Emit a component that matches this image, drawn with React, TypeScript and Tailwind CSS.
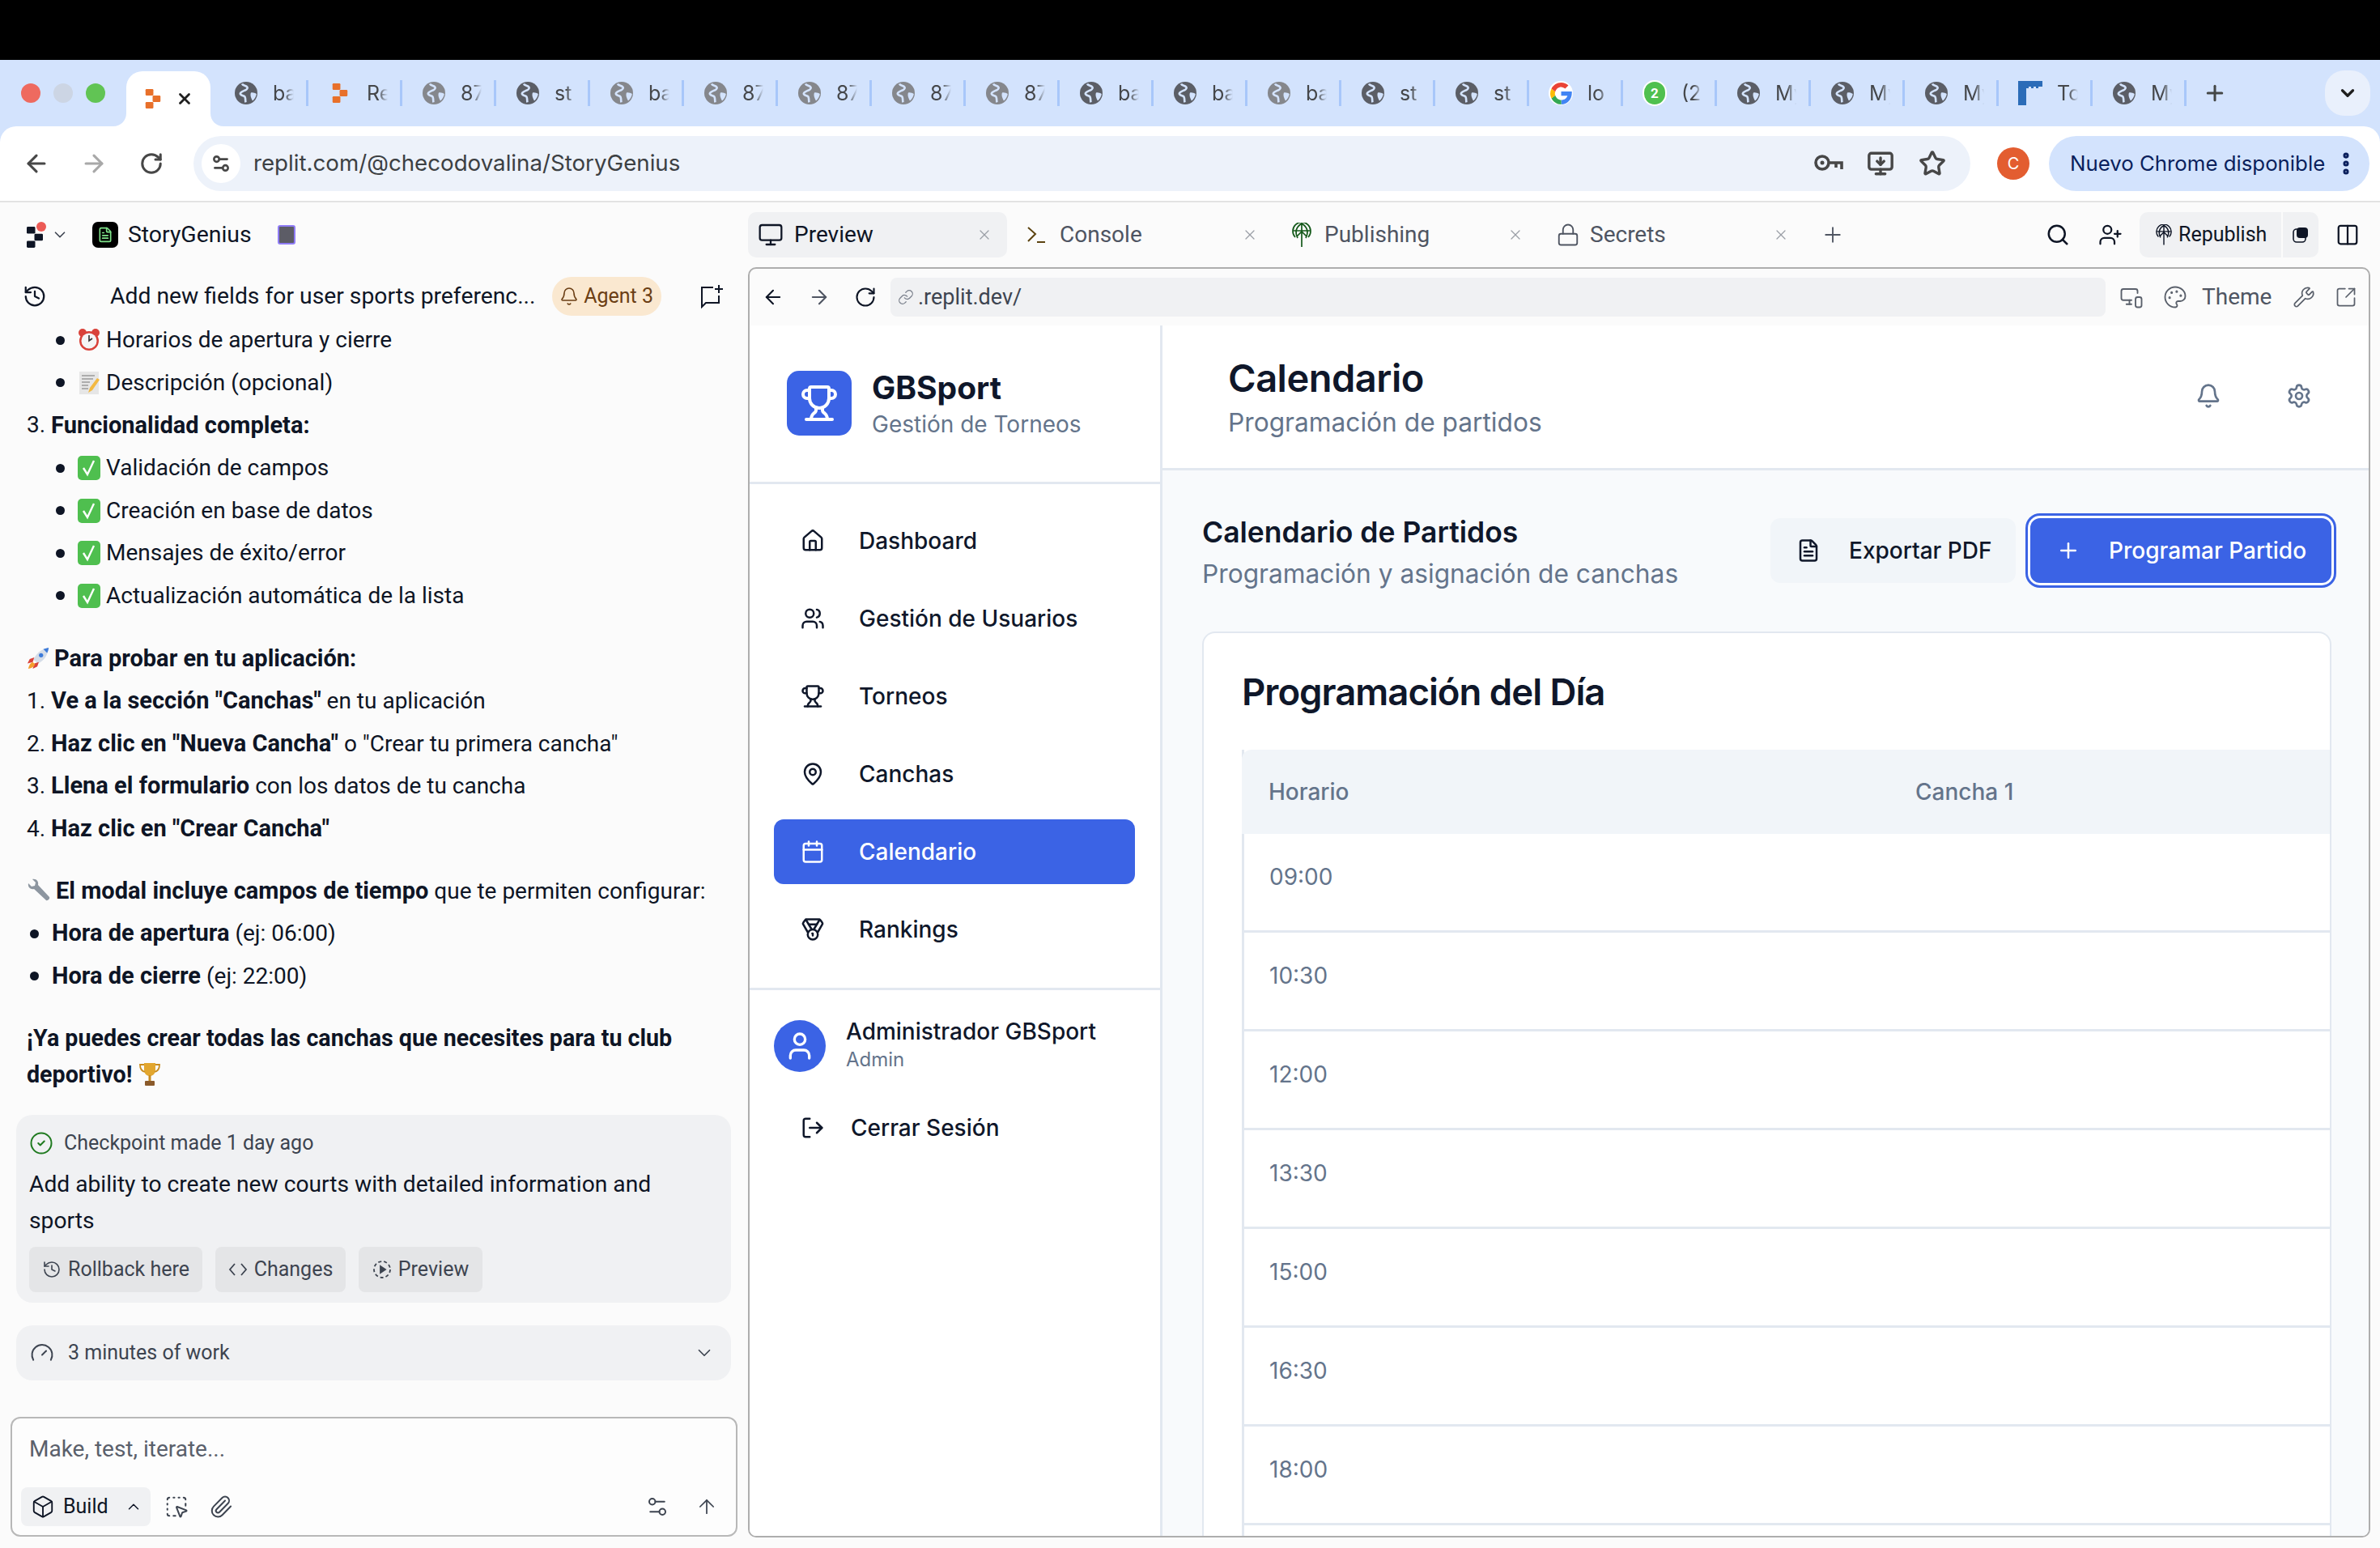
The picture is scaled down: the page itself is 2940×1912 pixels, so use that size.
import {
  ArrowLeft, ArrowRight, ArrowUp, Bell, Box, Calendar, ChevronDown, ChevronUp, CircleCheck, Columns2, EllipsisVertical, FileText, Gauge, History, House, Link, LogOut, MapPin, Medal, Monitor, MonitorDown, MonitorSmartphone, Palette, Paperclip, Plus, RotateCw, Search, Settings, Settings2, SquareArrowOutUpRight, SquareDashedMousePointer, Star, Lock, Trophy, User, UserPlus, Users, Wrench, X,
} from 'lucide-react';
import type { ReactNode } from 'react';

const plex = { fontFamily: 'Roboto, "Noto Sans", sans-serif' };

const ReplitMark = ({ color, className }: { color: string; className: string }) => (
  <svg viewBox="0 0 20 26" className={className} fill={color}>
    <rect x="0" y="0" width="10.5" height="8.6" rx="1.4" />
    <rect x="9.5" y="8.7" width="10.5" height="8.6" rx="1.4" />
    <rect x="0" y="17.4" width="10.5" height="8.6" rx="1.4" />
  </svg>
);

const Globe = ({ dark }: { dark: boolean }) => (
  <svg viewBox="0 0 30 30" className="w-[30px] h-[30px] shrink-0">
    <circle cx="15" cy="15" r="14" fill={dark ? '#5b5e66' : '#85878c'} />
    <path d="M10 3.5c1 2.5 5 2 6.5 4.200 1 1.800-1.500 3.200-3.200 4-2 1-5.200 1.500-5.500 4-.2 2 3.200 2 5 3.200 2 1.300 1 5 1.700 7.500" fill="none" stroke="#d3e3fd" strokeWidth="2.600" />
    <path d="M21 14.500c2.500-.5 5 .5 6.800 1.500-.5 3.500-2.300 6.500-4.800 8.500-1.500-2.500-3.500-7-2-10z" fill="#d3e3fd" />
  </svg>
);

const GoogleIcon = () => (
  <div className="w-[30px] h-[30px] shrink-0 rounded-full bg-white flex items-center justify-center">
    <svg viewBox="7 7 16 16" className="w-[27px] h-[27px]">
      <path d="M15 13.500h7.800c.5 5.500-3.200 9.500-7.800 9.500v-3.200c2.500 0 4.100-1.300 4.600-3.100H15z" fill="#4285f4" />
      <path d="M15 23c-3.100 0-5.800-1.800-7.100-4.400l2.800-2.200c.6 2 2.300 3.400 4.300 3.400z" fill="#34a853" />
      <path d="M7.900 18.600c-1.200-2.300-1.200-4.900 0-7.200l2.800 2.200c-.4 1-.4 1.900 0 2.800z" fill="#fbbc05" />
      <path d="M7.900 11.400C9.200 8.800 11.900 7 15 7c2.100 0 3.900.8 5.300 2.100l-2.400 2.400c-.8-.7-1.800-1.300-2.900-1.300-2 0-3.700 1.400-4.300 3.400z" fill="#ea4335" />
    </svg>
  </div>
);

const WhatsAppIcon = () => (
  <div className="relative w-[30px] h-[32px] shrink-0 rounded-full bg-[#4fc04f] border-2 border-white flex items-center justify-center text-white text-[17px] font-bold leading-none" style={plex}>
    2
  </div>
);

const ToIcon = () => (
  <svg viewBox="0 0 30 30" className="w-[30px] h-[32px] shrink-0">
    <rect width="30" height="30" fill="#2b6cb8" />
    <path d="M10 30V9h3V7h3v2h3V7h3v2h3V7h5v5H12v18z" fill="#d3e3fd" />
    <rect x="11" y="12" width="19" height="18" fill="#d3e3fd" />
  </svg>
);

const TABS: { label: string; icon: ReactNode }[] = [
  { label: 'ba', icon: <Globe dark /> },
  { label: 'Re', icon: <ReplitMark color="#e8702a" className="w-[20px] h-[24px] mx-[5px] shrink-0" /> },
  { label: '87', icon: <Globe dark={false} /> },
  { label: 'st', icon: <Globe dark /> },
  { label: 'ba', icon: <Globe dark={false} /> },
  { label: '87', icon: <Globe dark={false} /> },
  { label: '87', icon: <Globe dark={false} /> },
  { label: '87', icon: <Globe dark={false} /> },
  { label: '87', icon: <Globe dark={false} /> },
  { label: 'ba', icon: <Globe dark /> },
  { label: 'ba', icon: <Globe dark /> },
  { label: 'ba', icon: <Globe dark={false} /> },
  { label: 'st', icon: <Globe dark /> },
  { label: 'st', icon: <Globe dark /> },
  { label: 'lo', icon: <GoogleIcon /> },
  { label: '(2', icon: <WhatsAppIcon /> },
  { label: 'My', icon: <Globe dark /> },
  { label: 'My', icon: <Globe dark /> },
  { label: 'My', icon: <Globe dark /> },
  { label: 'To', icon: <ToIcon /> },
  { label: 'My', icon: <Globe dark /> },
];

const ChromeTabs = () => (
  <div className="h-[82px] flex items-center bg-[#d3e3fd] font-['Inter']">
    <div className="w-[156px] pl-[26px] flex gap-[16px] shrink-0">
      <span className="w-[24px] h-[24px] rounded-full bg-[#ee6a5f]" />
      <span className="w-[24px] h-[24px] rounded-full bg-[#ccd5e4]" />
      <span className="w-[24px] h-[24px] rounded-full bg-[#61c454]" />
    </div>
    <div className="relative self-end w-[104px] h-[68px] bg-white rounded-t-[20px] flex items-center pl-[23px] gap-[18px] shrink-0">
      <ReplitMark color="#e8702a" className="w-[20px] h-[24px]" />
      <X className="w-[22px] h-[22px] text-[#1f1f1f]" strokeWidth={3} />
      <svg viewBox="0 0 16 16" className="absolute -left-[16px] bottom-0 w-[16px] h-[16px]"><path d="M16 0v16H0C9 16 16 9 16 0z" fill="#fff" /></svg>
      <svg viewBox="0 0 16 16" className="absolute -right-[16px] bottom-0 w-[16px] h-[16px]"><path d="M0 0v16h16C7 16 0 9 0 0z" fill="#fff" /></svg>
    </div>
    <div className="flex ml-[5px] shrink-0">
      {TABS.map((t, i) => (
        <div key={i} className="relative w-[116px] h-[32px] flex items-center pl-[24px] gap-[18px] border-r-[3px] border-[#a8c7fa]">
          {t.icon}
          <span className="w-[26px] overflow-hidden whitespace-nowrap text-[25px] leading-[32px] text-[#45474a] [mask-image:linear-gradient(to_right,black_55%,transparent)]">{t.label}</span>
        </div>
      ))}
    </div>
    <Plus className="w-[30px] h-[30px] text-[#444746] ml-[20px] shrink-0" strokeWidth={2.4} />
    <div className="ml-auto mr-[12px] w-[56px] h-[56px] rounded-[24px] bg-[#e9f0fc] flex items-center justify-center">
      <ChevronDown className="w-[26px] h-[26px] text-[#1f1f1f]" strokeWidth={3} />
    </div>
  </div>
);

const ChromeToolbar = () => (
  <div className="bg-[#d3e3fd]">
    <div className="h-[94px] bg-white rounded-t-[20px] border-b-2 border-[#e3e3e3] flex items-center font-['Inter']">
      <ArrowLeft className="w-[34px] h-[34px] ml-[28px] text-[#474747] shrink-0" strokeWidth={2.2} />
      <ArrowRight className="w-[34px] h-[34px] ml-[37px] text-[#a8a8a8] shrink-0" strokeWidth={2.2} />
      <RotateCw className="w-[30px] h-[30px] ml-[39px] text-[#474747] shrink-0" strokeWidth={2.4} />
      <div className="ml-[37px] w-[2195px] h-[68px] rounded-full bg-[#edf2fa] flex items-center pl-[10px] shrink-0">
        <div className="w-[48px] h-[48px] rounded-full bg-white flex items-center justify-center">
          <Settings2 className="w-[26px] h-[26px] text-[#474747]" strokeWidth={2.4} />
        </div>
        <span className="ml-[16px] text-[27.700px] text-[#3c4043]">replit.com/@checodovalina/StoryGenius</span>
        <svg viewBox="0 0 36 24" className="ml-auto w-[36px] h-[24px] text-[#474747]" fill="none" stroke="currentColor" strokeWidth="3.600">
          <circle cx="10" cy="11" r="8" />
          <circle cx="10" cy="11" r="2.500" fill="currentColor" stroke="none" />
          <path d="M18 11h16v8M27 11v6" />
        </svg>
        <MonitorDown className="ml-[29px] w-[34px] h-[34px] text-[#474747]" strokeWidth={2.4} />
        <Star className="ml-[30px] mr-[30px] w-[34px] h-[34px] text-[#474747]" strokeWidth={2.4} />
      </div>
      <div className="ml-[33px] w-[40px] h-[40px] rounded-full bg-[#e35d30] text-white text-[20px] flex items-center justify-center shrink-0">C</div>
      <div className="ml-[24px] w-[396px] h-[68px] rounded-full bg-[#d3e3fd] flex items-center pl-[26px] shrink-0">
        <span className="text-[25.800px] text-[#0a1f5c] whitespace-nowrap">Nuevo Chrome disponible</span>
        <EllipsisVertical className="ml-[9px] w-[34px] h-[34px] text-[#0a1f5c]" strokeWidth={3} />
      </div>
    </div>
  </div>
);

const IconClock = () => (
  <svg viewBox="0 0 28 30" className="w-[28px] h-[30px] shrink-0">
    <circle cx="6" cy="6" r="5" fill="#d9423a" /><circle cx="22" cy="6" r="5" fill="#d9423a" />
    <circle cx="14" cy="16" r="12" fill="#d9423a" /><circle cx="14" cy="16" r="9.500" fill="#f5f5f5" />
    <path d="M14 9v7l4-3" stroke="#333" strokeWidth="1.600" fill="none" />
  </svg>
);
const IconMemo = () => (
  <svg viewBox="0 0 28 30" className="w-[28px] h-[30px] shrink-0">
    <rect x="2" y="1" width="24" height="28" fill="#e6e6e6" />
    <path d="M5 6h16M5 10h14M5 14h10M5 18h8M5 22h8" stroke="#9a9a9a" strokeWidth="1.300" />
    <path d="M13 27l2-6L24 9l3 2-9 13z" fill="#f3b942" />
  </svg>
);
const IconCheck = () => (
  <svg viewBox="0 0 28 30" className="w-[28px] h-[30px] shrink-0">
    <rect x="0" y="0" width="28" height="30" rx="5" fill="#4fbf4f" />
    <path d="M7 15l5 8 8-17" stroke="#fff" strokeWidth="2.400" fill="none" />
  </svg>
);
const IconRocket = () => (
  <svg viewBox="0 0 30 30" className="w-[28px] h-[30px] shrink-0">
    <path d="M9 17C12 9 19 3 29 1c-1 10-6 17-14 21z" fill="#d5dde8" />
    <path d="M22 3l7-2c0 2-1 5-2 7z" fill="#3d7bd9" />
    <circle cx="19" cy="11" r="2.800" fill="#3d7bd9" />
    <path d="M10 14l-6 2-3 6 7-2zM16 20l-2 6-6 3 2-7z" fill="#d9423a" />
    <path d="M8 20c-3 1-5 4-6 9 5-1 8-3 9-6z" fill="#f59e2c" />
  </svg>
);
const IconWrench = () => (
  <svg viewBox="0 0 30 30" className="w-[30px] h-[30px] shrink-0">
    <path d="M2 6l4 4 4-1 1-4-4-4c5-1 8 3 7 7l14 15c1 2-2 5-4 4L9 13C5 14 1 11 2 6z" fill="#8d96a0" />
  </svg>
);
const IconTrophy = () => (
  <svg viewBox="0 0 28 30" className="w-[28px] h-[30px] shrink-0">
    <path d="M7 1h14v8c0 5-3 8-7 8s-7-3-7-8z" fill="#e2a62e" />
    <path d="M7 3H2c0 5 2 8 6 9M21 3h5c0 5-2 8-6 9" fill="none" stroke="#c98c1e" strokeWidth="1.800" />
    <rect x="12.500" y="16" width="3" height="7" fill="#c98c1e" />
    <rect x="8" y="23" width="12" height="6" rx="1" fill="#8a5a2b" />
  </svg>
);

const Bullet = ({ children, icon }: { children: ReactNode; icon?: ReactNode }) => (
  <div className="h-[52.600px] flex items-center">
    <span className="ml-[69px] w-[11px] h-[11px] rounded-full bg-[#0e1525] shrink-0" />
    <span className="ml-[16px] mr-[7px]">{icon}</span>
    <span>{children}</span>
  </div>
);

const Sub = ({ children }: { children: ReactNode }) => (
  <div className="h-[52.600px] flex items-center pl-[33px] whitespace-pre">{children}</div>
);

const Strong = ({ children }: { children: ReactNode }) => (
  <b className="font-bold text-[29px]">{children}</b>
);

const ChatPane = () => (
  <div className="w-[924px] shrink-0 flex flex-col text-[#0e1525] text-[28px]" style={plex}>
    <div className="h-[80px] flex items-center pl-[33px]">
      <div className="relative w-[20px] h-[32px]">
        <ReplitMark color="#0e1525" className="absolute left-0 bottom-0 w-[20px] h-[26px]" />
        <span className="absolute left-[12px] top-0 w-[12px] h-[12px] rounded-full bg-[#ec5b56]" />
      </div>
      <ChevronDown className="ml-[10px] w-[22px] h-[22px] text-[#3d4450]" strokeWidth={1.800} />
      <div className="ml-[29px] w-[32px] h-[32px] rounded-[7px] bg-black flex items-center justify-center">
        <FileText className="w-[20px] h-[20px] text-[#7fe38a]" strokeWidth={2} />
      </div>
      <span className="ml-[12px] text-[28.400px]">StoryGenius</span>
      <span className="ml-[32px] w-[22px] h-[24px] rounded-[3px] bg-[#5c5c66] border-2 border-[#8f7cf5]" />
    </div>
    <div className="h-[72px] flex items-center pl-[28px] pr-[30px]">
      <History className="w-[30px] h-[30px] shrink-0" strokeWidth={1.800} />
      <span className="ml-[78px] whitespace-nowrap text-[28.300px]">Add new fields for user sports preferenc...</span>
      <div className="ml-[20px] w-[135px] h-[48px] rounded-full bg-[#fae8d0] text-[#6b3e14] text-[25px] flex items-center justify-center gap-[6px] shrink-0">
        <Bell className="w-[24px] h-[24px]" strokeWidth={1.600} />
        Agent 3
      </div>
      <svg viewBox="0 0 30 30" className="ml-auto w-[30px] h-[30px] shrink-0" fill="none" stroke="currentColor" strokeWidth="2">
        <path d="M17 4H3v24l5-5h16v-9" />
        <path d="M24 1v10M19 6h10" />
      </svg>
    </div>
    <div className="-mt-[8px]">
      <Bullet icon={<IconClock />}>Horarios de apertura y cierre</Bullet>
      <Bullet icon={<IconMemo />}>Descripción (opcional)</Bullet>
      <Sub>3. <Strong>Funcionalidad completa:</Strong></Sub>
      <Bullet icon={<IconCheck />}>Validación de campos</Bullet>
      <Bullet icon={<IconCheck />}>Creación en base de datos</Bullet>
      <Bullet icon={<IconCheck />}>Mensajes de éxito/error</Bullet>
      <Bullet icon={<IconCheck />}>Actualización automática de la lista</Bullet>
      <div className="h-[25px]" />
      <Sub><span className="flex items-center gap-[6px]"><IconRocket /><Strong>Para probar en tu aplicación:</Strong></span></Sub>
      <Sub>1. <Strong>Ve a la sección "Canchas"</Strong> en tu aplicación</Sub>
      <Sub>2. <Strong>Haz clic en "Nueva Cancha"</Strong> o "Crear tu primera cancha"</Sub>
      <Sub>3. <Strong>Llena el formulario</Strong> con los datos de tu cancha</Sub>
      <Sub>4. <Strong>Haz clic en "Crear Cancha"</Strong></Sub>
      <div className="h-[24px]" />
      <Sub><span className="flex items-center gap-[6px]"><IconWrench /><span><Strong>El modal incluye campos de tiempo</Strong> que te permiten configurar:</span></span></Sub>
      <div className="h-[52.600px] flex items-center pl-[37px]"><span className="w-[11px] h-[11px] rounded-full bg-[#0e1525] mr-[16px]" /><span><Strong>Hora de apertura</Strong> (ej: 06:00)</span></div>
      <div className="h-[52.600px] flex items-center pl-[37px]"><span className="w-[11px] h-[11px] rounded-full bg-[#0e1525] mr-[16px]" /><span><Strong>Hora de cierre</Strong> (ej: 22:00)</span></div>
      <div className="mt-[28px] pl-[33px] w-[880px] leading-[45px] font-bold text-[28.650px]">
        ¡Ya puedes crear todas las canchas que necesites para tu club deportivo! <span className="inline-block align-[-5px]"><IconTrophy /></span>
      </div>
    </div>
    <div className="mt-[27px] ml-[20px] w-[883px] h-[232px] bg-[#f0f1f3] rounded-[20px] px-[16px] pt-[18px]">
      <div className="flex items-center h-[34px] text-[25px] text-[#3d4450]">
        <CircleCheck className="w-[30px] h-[30px] text-[#1f7a1f] mr-[13px]" strokeWidth={1.600} />
        Checkpoint made 1 day ago
      </div>
      <div className="mt-[11px] leading-[45px] w-[830px] text-[28.200px]">Add ability to create new courts with detailed information and sports</div>
      <div className="mt-[10px] flex gap-[16px] text-[25px] text-[#3d4450]">
        <div className="h-[56px] w-[214px] rounded-[8px] bg-[#e4e5e7] flex items-center justify-center gap-[8px]"><History className="w-[24px] h-[24px]" strokeWidth={1.600} />Rollback here</div>
        <div className="h-[56px] w-[161px] rounded-[8px] bg-[#e4e5e7] flex items-center justify-center gap-[8px]">
          <svg viewBox="0 0 24 24" className="w-[24px] h-[24px]" fill="none" stroke="currentColor" strokeWidth="1.800"><path d="M8 5l-6 7 6 7M16 5l6 7-6 7" /></svg>
          Changes
        </div>
        <div className="h-[56px] w-[153px] rounded-[8px] bg-[#e4e5e7] flex items-center justify-center gap-[8px]">
          <svg viewBox="0 0 24 24" className="w-[24px] h-[24px]" fill="none" stroke="currentColor" strokeWidth="1.800"><circle cx="12" cy="12" r="10" strokeDasharray="4 3" /><path d="M10 8l6 4-6 4z" fill="currentColor" /></svg>
          Preview
        </div>
      </div>
    </div>
    <div className="mt-[28px] ml-[20px] w-[883px] h-[68px] bg-[#f0f1f3] rounded-[20px] flex items-center pl-[17px] pr-[20px] text-[25px] text-[#3d4450]">
      <Gauge className="w-[30px] h-[30px] mr-[17px]" strokeWidth={1.600} />
      3 minutes of work
      <ChevronDown className="ml-auto w-[26px] h-[26px]" strokeWidth={1.600} />
    </div>
    <div className="mt-[45px] ml-[13px] w-[898px] h-[148px] rounded-[12px] border-2 border-[#b8b8b8] bg-[#fdfdfd] flex flex-col">
      <div className="h-[76px] flex items-center pl-[21px] text-[#5a606b]">Make, test, iterate...</div>
      <div className="mt-[9px] flex items-center pl-[11px] pr-[22px]">
        <div className="w-[160px] h-[48px] rounded-[8px] bg-[#f0f1f3] flex items-center pl-[12px] text-[25px]">
          <Box className="w-[30px] h-[30px] mr-[10px]" strokeWidth={1.500} />
          Build
          <ChevronUp className="ml-[20px] w-[22px] h-[22px]" strokeWidth={1.600} />
        </div>
        <SquareDashedMousePointer className="ml-[17px] w-[30px] h-[30px] text-[#3d4450]" strokeWidth={1.600} />
        <Paperclip className="ml-[25px] w-[30px] h-[30px] text-[#3d4450]" strokeWidth={1.600} />
        <Settings2 className="ml-auto w-[30px] h-[30px] text-[#3d4450]" strokeWidth={1.600} />
        <ArrowUp className="ml-[32px] w-[28px] h-[28px] text-[#3d4450]" strokeWidth={1.500} />
      </div>
    </div>
  </div>
);

const PublishIcon = ({ className }: { className: string }) => (
  <svg viewBox="0 0 24 30" className={className} fill="none" stroke="currentColor" strokeWidth="1.700">
    <path d="M4 18a11 11 0 1 1 16 0" />
    <path d="M1.500 10h21M12 0v30M12 1c-8 5-8 12-5 18M12 1c8 5 8 12 5 18M6 17l6-6 6 6" />
  </svg>
);

const WorkspaceTab = ({ icon, label, active, close }: { icon: ReactNode; label: string; active?: boolean; close: string }) => (
  <div className={`relative w-[320px] h-[56px] rounded-[10px] flex items-center shrink-0 ${active ? 'bg-[#f0f1f3] text-[#0e1525]' : 'text-[#4f5562]'}`}>
    {icon}
    <span className="text-[28px] whitespace-nowrap">{label}</span>
    <X className={`absolute top-[18px] w-[20px] h-[20px] text-[#9a9ea6] ${close}`} strokeWidth={1.500} />
  </div>
);

const NAV = [
  { label: 'Dashboard', icon: House },
  { label: 'Gestión de Usuarios', icon: Users },
  { label: 'Torneos', icon: Trophy },
  { label: 'Canchas', icon: MapPin },
  { label: 'Calendario', icon: Calendar },
  { label: 'Rankings', icon: Medal },
];

const Sidebar = () => (
  <div className="w-[510px] shrink-0 bg-white border-r-[3px] border-[#e2e8f0] flex flex-col">
    <div className="h-[196px] shrink-0 pl-[46px] pt-[55px] flex border-b-[3px] border-[#e2e8f0]">
      <div className="w-[80px] h-[80px] mt-[1px] rounded-[15px] bg-[#3b63e5] flex items-center justify-center shrink-0">
        <Trophy className="w-[48px] h-[48px] text-white" strokeWidth={2} />
      </div>
      <div className="ml-[25px]">
        <div className="text-[39px] leading-[44px] font-bold text-[#0f172a]">GBSport</div>
        <div className="text-[28px] leading-[38px] mt-[4px] text-[#64748b]">Gestión de Torneos</div>
      </div>
    </div>
    <div className="pt-[30px] pb-[32px] px-[30px] border-b-[3px] border-[#e2e8f0] flex flex-col gap-[16px]">
      {NAV.map((n) => (
        <div key={n.label} className={`h-[80px] w-[446px] rounded-[12px] flex items-center pl-[33px] gap-[42px] text-[28px] font-medium ${n.label === 'Calendario' ? 'bg-[#3b63e5] text-white' : 'text-[#0f172a]'}`}>
          <n.icon className="w-[30px] h-[30px]" strokeWidth={2} />
          {n.label}
        </div>
      ))}
    </div>
    <div className="pt-[34px] pl-[30px] flex items-center">
      <div className="w-[64px] h-[64px] rounded-full bg-[#3b63e5] flex items-center justify-center shrink-0">
        <User className="w-[40px] h-[40px] text-white" strokeWidth={2} />
      </div>
      <div className="ml-[25px]">
        <div className="text-[28px] leading-[34px] font-medium text-[#0f172a]">Administrador GBSport</div>
        <div className="text-[24px] leading-[36px] text-[#64748b]">Admin</div>
      </div>
    </div>
    <div className="mt-[45px] pl-[63px] flex items-center gap-[19px] text-[28px] font-medium text-[#0f172a]">
      <LogOut className="w-[30px] h-[30px]" strokeWidth={2} />
      <span className="ml-[13px]">Cerrar Sesión</span>
    </div>
  </div>
);

const TIMES = ['09:00', '10:30', '12:00', '13:30', '15:00', '16:30', '18:00', '19:30'];

const CalendarMain = () => (
  <div className="flex-1 min-w-0 bg-[#f8fafc] flex flex-col overflow-hidden">
    <div className="h-[179px] shrink-0 bg-white border-b-[3px] border-[#e2e8f0] pl-[81px] pr-[70px] flex items-center">
      <div className="mt-[1px]">
        <div className="text-[47px] leading-[56px] font-semibold text-[#0f172a] tracking-[-0.5px]">Calendario</div>
        <div className="text-[31.700px] leading-[42px] text-[#64748b] mt-[6px]">Programación de partidos</div>
      </div>
      <Bell className="ml-auto w-[32px] h-[32px] text-[#64748b] -mt-[3px]" strokeWidth={2} />
      <Settings className="ml-[80px] w-[32px] h-[32px] text-[#64748b] -mt-[3px]" strokeWidth={2} />
    </div>
    <div className="pl-[49px] pr-[46px] pt-[59px]">
      <div className="flex items-start h-[80px]">
        <div className="-mt-[2px]">
          <div className="text-[35.500px] leading-[40px] font-semibold text-[#0f172a]">Calendario de Partidos</div>
          <div className="text-[31.700px] leading-[44px] mt-[9px] text-[#64748b]">Programación y asignación de canchas</div>
        </div>
        <div className="ml-auto w-[303px] h-[80px] rounded-[12px] bg-[#f1f5f9] flex items-center pl-[32px] gap-[35px] text-[28px] font-medium text-[#0f172a]">
          <FileText className="w-[30px] h-[30px] shrink-0" strokeWidth={2} />
          Exportar PDF
        </div>
        <div className="ml-[18px] w-[372px] h-[80px] rounded-[12px] bg-[#3b63e5] ring-[3px] ring-[#3b63e5] ring-offset-[3px] ring-offset-white flex items-center pl-[32px] gap-[35px] text-[28px] font-medium text-white">
          <Plus className="w-[30px] h-[30px] shrink-0" strokeWidth={2} />
          Programar Partido
        </div>
      </div>
      <div className="mt-[60px] w-[1395px] bg-white border-2 border-[#e2e8f0] rounded-t-[16px] pt-[43px] pl-[47px] border-b-0">
        <div className="text-[45.500px] leading-[60px] font-semibold text-[#0f172a] tracking-[-1px]">Programación del Día</div>
        <div className="mt-[41px] border-l-[3px] border-[#e2e8f0]">
          <div className="h-[104px] bg-[#f1f5f9] rounded-tl-[12px] flex items-center text-[28px] font-medium text-[#64748b] -ml-[3px]">
            <span className="w-[832px] pl-[33px]">Horario</span>
            <span>Cancha 1</span>
          </div>
          {TIMES.map((t) => (
            <div key={t} className="h-[122px] border-b-[3px] border-[#e2e8f0] pl-[31px] pt-[35px] text-[28px] leading-[36px] text-[#64748b]">{t}</div>
          ))}
        </div>
      </div>
    </div>
  </div>
);

const PreviewPane = () => (
  <div className="flex-1 min-w-0 flex flex-col" style={plex}>
    <div className="h-[80px] shrink-0 flex items-center text-[#0e1525]">
      <div className="flex gap-[8px]">
        <WorkspaceTab active label="Preview" close="left-[282px]" icon={<Monitor className="ml-[12px] mr-[13px] w-[32px] h-[32px]" strokeWidth={1.700} />} />
        <WorkspaceTab label="Console" close="left-[282px]" icon={<svg viewBox="0 0 24 24" className="ml-[16px] mr-[17px] w-[24px] h-[24px]" fill="none" strokeWidth="2"><path d="M2 3l9 8-9 9" stroke="#5c4310" /><path d="M13 21h10" stroke="#5c4310" /></svg>} />
        <WorkspaceTab label="Publishing" close="left-[282px]" icon={<PublishIcon className="ml-[16px] mr-[16px] w-[24px] h-[30px] text-[#14591a]" />} />
        <WorkspaceTab label="Secrets" close="left-[282px]" icon={<Lock className="ml-[14px] mr-[12px] w-[30px] h-[30px]" strokeWidth={1.500} />} />
      </div>
      <Plus className="ml-[21px] w-[30px] h-[30px] text-[#4f5562]" strokeWidth={1.500} />
      <Search className="ml-[248px] w-[30px] h-[30px]" strokeWidth={2} />
      <UserPlus className="ml-[35px] w-[30px] h-[30px]" strokeWidth={1.800} />
      <div className="ml-[21px] w-[175px] h-[56px] rounded-l-[10px] bg-[#f0f1f3] flex items-center pl-[20px] gap-[8px] text-[25px]">
        <PublishIcon className="w-[20px] h-[26px]" />
        Republish
      </div>
      <div className="ml-[2px] w-[44px] h-[56px] rounded-r-[10px] bg-[#f0f1f3] flex items-center justify-center">
        <svg viewBox="0 0 20 20" className="w-[20px] h-[22px]"><rect x="1" y="3" width="15" height="16" rx="4" fill="none" stroke="currentColor" strokeWidth="1.600" /><rect x="5" y="1" width="14" height="13" rx="4" fill="currentColor" /></svg>
      </div>
      <Columns2 className="ml-[21px] w-[30px] h-[30px]" strokeWidth={1.800} />
    </div>
    <div className="flex-1 min-h-0 border-2 border-[#aeaeae] rounded-[10px] overflow-hidden flex flex-col bg-[#fbfbfb]">
      <div className="h-[70px] shrink-0 flex items-center text-[#0e1525]">
        <ArrowLeft className="ml-[15px] w-[28px] h-[28px] shrink-0" strokeWidth={1.800} />
        <ArrowRight className="ml-[29px] w-[28px] h-[28px] shrink-0 text-[#4f5562]" strokeWidth={1.800} />
        <RotateCw className="ml-[29px] w-[28px] h-[28px] shrink-0" strokeWidth={1.800} />
        <div className="ml-[17px] w-[1501px] h-[48px] rounded-[8px] bg-[#f0f1f3] flex items-center pl-[9px] text-[27px] text-[#3d4450] shrink-0">
          <Link className="w-[20px] h-[20px] mr-[5px] text-[#7a808c]" strokeWidth={1.500} />
          .replit.dev/
        </div>
        <MonitorSmartphone className="ml-[17px] w-[30px] h-[30px] text-[#5a606b] shrink-0" strokeWidth={1.500} />
        <Palette className="ml-[24px] w-[30px] h-[30px] text-[#5a606b] shrink-0" strokeWidth={1.500} />
        <span className="ml-[18px] text-[28px] text-[#4f5562]">Theme</span>
        <Wrench className="ml-[26px] w-[28px] h-[28px] text-[#5a606b] shrink-0" strokeWidth={1.500} />
        <SquareArrowOutUpRight className="ml-[24px] w-[28px] h-[28px] text-[#5a606b] shrink-0" strokeWidth={1.500} />
      </div>
      <div className="flex-1 min-h-0 flex font-['Inter'] overflow-hidden">
        <Sidebar />
        <CalendarMain />
      </div>
    </div>
  </div>
);

export default function App() {
  return (
    <div className="w-[2940px] h-[1912px] overflow-hidden flex flex-col bg-[#fbfbfb]">
      <div className="h-[74px] shrink-0 bg-black" />
      <ChromeTabs />
      <ChromeToolbar />
      <div className="flex-1 min-h-0 flex pr-[12px] pb-[13px]">
        <ChatPane />
        <PreviewPane />
      </div>
    </div>
  );
}
